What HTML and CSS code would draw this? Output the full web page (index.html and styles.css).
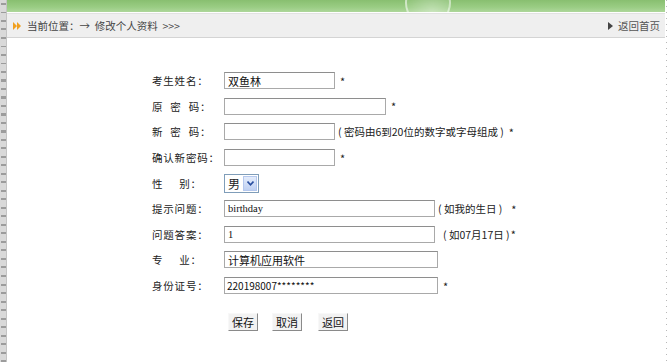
FILE: index.html
```html
<!DOCTYPE html>
<html lang="zh">
<head>
<meta charset="utf-8">
<title>修改个人资料</title>
<link rel="stylesheet" href="styles.css">
</head>
<body>
<div class="page">
  <div class="strip-left"></div>
  <div class="main">
    <div class="banner"><div class="bubble"></div></div>
    <div class="crumb">
      <div class="crumb-left">
        <svg class="ico-ff" width="9" height="8" viewBox="0 0 9 8"><path d="M0 0 L4 4 L0 8 Z M4 0 L8 4 L4 8 Z" fill="#f0a020"/></svg>
        <span>当前位置：→&nbsp; 修改个人资料 &nbsp;&gt;&gt;&gt;</span>
      </div>
      <div class="crumb-right">
        <svg width="5" height="8" viewBox="0 0 5 8"><path d="M0 0 L5 4 L0 8 Z" fill="#444"/></svg>
        <span>返回首页</span>
      </div>
    </div>
    <form class="form">
      <div class="row"><label class="lbl">考生姓名：</label><div class="fld"><input class="in w110" value="双鱼林"><span class="star">*</span></div></div>
      <div class="row"><label class="lbl">原<span class="sp"></span>密<span class="sp"></span>码：</label><div class="fld"><input class="in w161" type="password"><span class="star">*</span></div></div>
      <div class="row"><label class="lbl">新<span class="sp"></span>密<span class="sp"></span>码：</label><div class="fld"><input class="in w110" type="password"><span class="hint">( 密码由6到20位的数字或字母组成 )</span><span class="star">*</span></div></div>
      <div class="row"><label class="lbl">确认新密码：</label><div class="fld"><input class="in w110" type="password"><span class="star">*</span></div></div>
      <div class="row"><label class="lbl">性<span class="sp2"></span>别：</label><div class="fld"><div class="sel"><span class="sel-txt">男</span><span class="sel-btn"><svg width="7" height="5" viewBox="0 0 7 5"><path d="M0.5 0.5 L3.5 3.8 L6.5 0.5" fill="none" stroke="#2a4fa0" stroke-width="1.6"/></svg></span></div></div></div>
      <div class="row"><label class="lbl">提示问题：</label><div class="fld"><input class="in w210 mono" value="birthday"><span class="hint">( 如我的生日 )</span><span class="star s1">*</span></div></div>
      <div class="row"><label class="lbl">问题答案：</label><div class="fld"><input class="in w210 mono" value="1"><span class="hint h2">( 如07月17日 )</span><span class="star s0">*</span></div></div>
      <div class="row"><label class="lbl">专<span class="sp2"></span>业：</label><div class="fld"><input class="in w213" value="计算机应用软件"></div></div>
      <div class="row"><label class="lbl">身份证号：</label><div class="fld"><input class="in w213 sm" value="220198007********"><span class="star">*</span></div></div>
      <div class="btns">
        <button type="button" class="btn">保存</button>
        <button type="button" class="btn">取消</button>
        <button type="button" class="btn">返回</button>
      </div>
    </form>
  </div>
  <div class="strip-right"></div>
</div>
</body>
</html>
```
FILE: styles.css
```css
html, body {
  margin: 0;
  padding: 0;
  background: #ffffff;
}
body {
  font-family: "Noto Sans CJK SC", "DejaVu Sans", sans-serif;
  font-size: 10.5px;
  color: #222;
}
.page {
  display: flex;
  width: 670px;
  height: 362px;
  overflow: hidden;
}
.strip-left {
  width: 7px;
  flex: none;
  background-color: #d9d9d9;
  background-image:
    repeating-linear-gradient(180deg, transparent 0 3px, #9c9c9c 3px 5px, transparent 5px 8.5px);
  background-size: 5px 100%;
  background-repeat: no-repeat;
  background-position: 1px 0;
  border-right: 1px solid #c4c4c4;
  box-sizing: border-box;
}
.strip-right {
  width: 5px;
  flex: none;
  background-color: #fff;
  background-image: repeating-linear-gradient(180deg, #b8b8b8 0 1px, #fff 1px 6px);
  background-size: 1px 100%;
  background-repeat: no-repeat;
  background-position: 1px 0;
}
.main {
  flex: 1;
  display: flex;
  flex-direction: column;
}
.banner {
  height: 12px;
  position: relative;
  overflow: hidden;
  background: linear-gradient(180deg, #88bf70 0%, #9acd84 60%, #aed79b 100%);
}
.bubble {
  position: absolute;
  left: 398px;
  top: -20px;
  width: 42px;
  height: 42px;
  border-radius: 50%;
  border: 2px solid rgba(255,255,255,0.5);
  background: radial-gradient(circle at 60% 70%, rgba(255,255,255,0.35), rgba(255,255,255,0.05) 70%);
}
.crumb {
  height: 23px;
  margin-top: 1px;
  background: #efefef;
  border-top: 1px solid #e2e2e2;
  border-bottom: 1px solid #d4d4d4;
  display: flex;
  align-items: center;
  justify-content: space-between;
  color: #444;
  padding: 0 5px 0 6px;
}
.crumb-left, .crumb-right {
  display: flex;
  align-items: center;
  gap: 5px;
}
.crumb-right { gap: 5px; color: #555; }
.form {
  padding: 30px 0 0 145px;
}
.row {
  display: flex;
  align-items: center;
  height: 25.6px;
}
.lbl {
  width: 72px;
  flex: none;
  color: #222;
  font-size: 10.5px;
  letter-spacing: 0.8px;
  display: flex;
  align-items: center;
}
.sp { display: inline-block; width: 7px; }
.sp2 { display: inline-block; width: 16px; }
.fld {
  display: flex;
  align-items: center;
}
.in {
  box-sizing: border-box;
  height: 17px;
  border: 1px solid #a9a9a9;
  border-top-color: #8e8e8e;
  padding: 0 3px;
  font-family: "Noto Sans CJK SC", sans-serif;
  font-size: 11px;
  color: #111;
  background: #fff;
  outline: none;
}
.sm { font-size: 10px; padding-left: 2px; }
.mono { font-family: "Liberation Serif", "Noto Sans CJK SC", serif; font-size: 10.5px; }
.w110 { width: 111px; }
.w161 { width: 162px; }
.w210 { width: 211px; }
.w213 { width: 214px; }
.star {
  margin-left: 5px;
  font-size: 11px;
  color: #222;
}
.s0 { margin-left: 1px; }
.s1 { margin-left: 9px; }
.hint {
  margin-left: 3px;
  color: #222;
  font-size: 10.5px;
}
.h2 { margin-left: 8px; }
.sel {
  box-sizing: border-box;
  width: 35px;
  height: 19px;
  border: 1px solid #7f9db9;
  display: flex;
  align-items: center;
  background: #fff;
}
.sel-txt {
  flex: 1;
  padding-left: 3px;
  font-size: 12px;
}
.sel-btn {
  width: 14px;
  height: 15px;
  margin-right: 1px;
  background: linear-gradient(180deg, #e4ecfb, #bfd0f2);
  border: 1px solid #b5c8ee;
  box-sizing: border-box;
  display: flex;
  align-items: center;
  justify-content: center;
}
.btns {
  display: flex;
  gap: 14px;
  padding: 15px 0 0 76px;
}
.btn {
  box-sizing: border-box;
  height: 18px;
  width: 30px;
  padding: 0;
  font-family: "Noto Sans CJK SC", sans-serif;
  font-size: 11px;
  color: #111;
  background: #f2f2f2;
  border: 1px solid;
  border-color: #f8f8f8 #8a8a8a #8a8a8a #f8f8f8;
  line-height: 15px;
}
.btn + .btn + .btn { margin-left: 2px; }
```
